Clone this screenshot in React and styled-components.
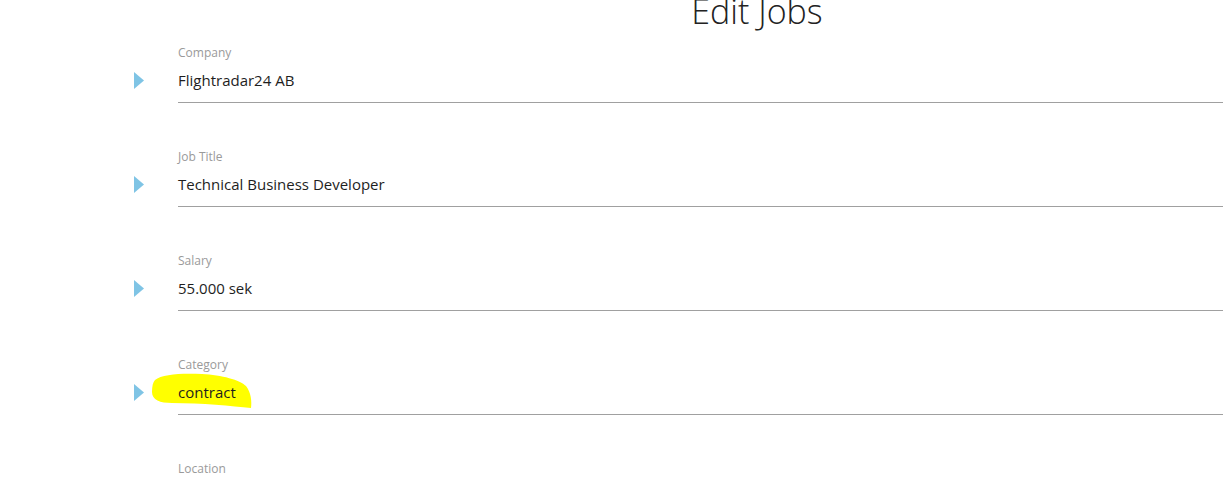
import React from 'react';
import styled, { createGlobalStyle } from 'styled-components';

const GlobalStyle = createGlobalStyle`
  body {
    margin: 0;
    background: #ffffff;
    font-family: 'Open Sans', 'Noto Sans', sans-serif;
    overflow: hidden;
  }
`;

const fields = [
  { label: 'Company', value: 'Flightradar24 AB' },
  { label: 'Job Title', value: 'Technical Business Developer' },
  { label: 'Salary', value: '55.000 sek' },
  { label: 'Category', value: 'contract', marked: true },
  { label: 'Location', value: '' },
];

const Highlight = () => (
  <Marker viewBox="0 0 102 38" aria-hidden="true">
    <path
      d="M3 8 C10 2, 30 1, 50 2 C70 3, 88 8, 94 14 C99 20, 100 30, 99 36 C80 34, 50 31, 20 31 C8 31, 0 28, 0 20 C0 14, 1 10, 3 8 Z"
      fill="#ffff00"
    />
  </Marker>
);

const Field = ({ label, value, marked }) => (
  <FieldBody>
    <Label>{label}</Label>
    <ValueRow>
      <Arrow viewBox="0 0 10 17" aria-hidden="true">
        <polygon points="0,0 10,8.5 0,17" fill="#7fc4e5" />
      </Arrow>
      {marked && <Highlight />}
      <Value>{value}</Value>
    </ValueRow>
  </FieldBody>
);

const App = () => (
  <>
    <GlobalStyle />
    <Page>
      <Title>Edit Jobs</Title>
      <Form>
        {fields.map((f) => (
          <Field key={f.label} {...f} />
        ))}
      </Form>
    </Page>
  </>
);

export default App;

const Page = styled.div`
  width: 1223px;
`;

const Title = styled.h1`
  margin: -12px 0 0;
  padding-left: 291px;
  text-align: center;
  font-size: 34px;
  font-weight: 300;
  line-height: 46px;
  color: #222222;
`;

const Form = styled.form`
  display: flex;
  flex-direction: column;
  gap: 46px;
  padding: 11px 0 0 178px;
`;

const FieldBody = styled.div`
  display: flex;
  flex-direction: column;
  gap: 9px;
  padding-bottom: 12px;
  border-bottom: 1px solid #a0a0a0;
`;

const Label = styled.span`
  font-size: 12px;
  line-height: 16px;
  color: #9a9a9a;
`;

const ValueRow = styled.div`
  position: relative;
  display: flex;
  align-items: center;
  gap: 34px;
  margin-left: -44px;
  height: 20px;
`;

const Arrow = styled.svg`
  width: 10px;
  height: 17px;
  flex: none;
`;

const Marker = styled.svg`
  position: absolute;
  left: 18px;
  top: -10px;
  width: 102px;
  height: 38px;
`;

const Value = styled.span`
  position: relative;
  font-size: 15px;
  line-height: 20px;
  color: #1e1e1e;
`;
